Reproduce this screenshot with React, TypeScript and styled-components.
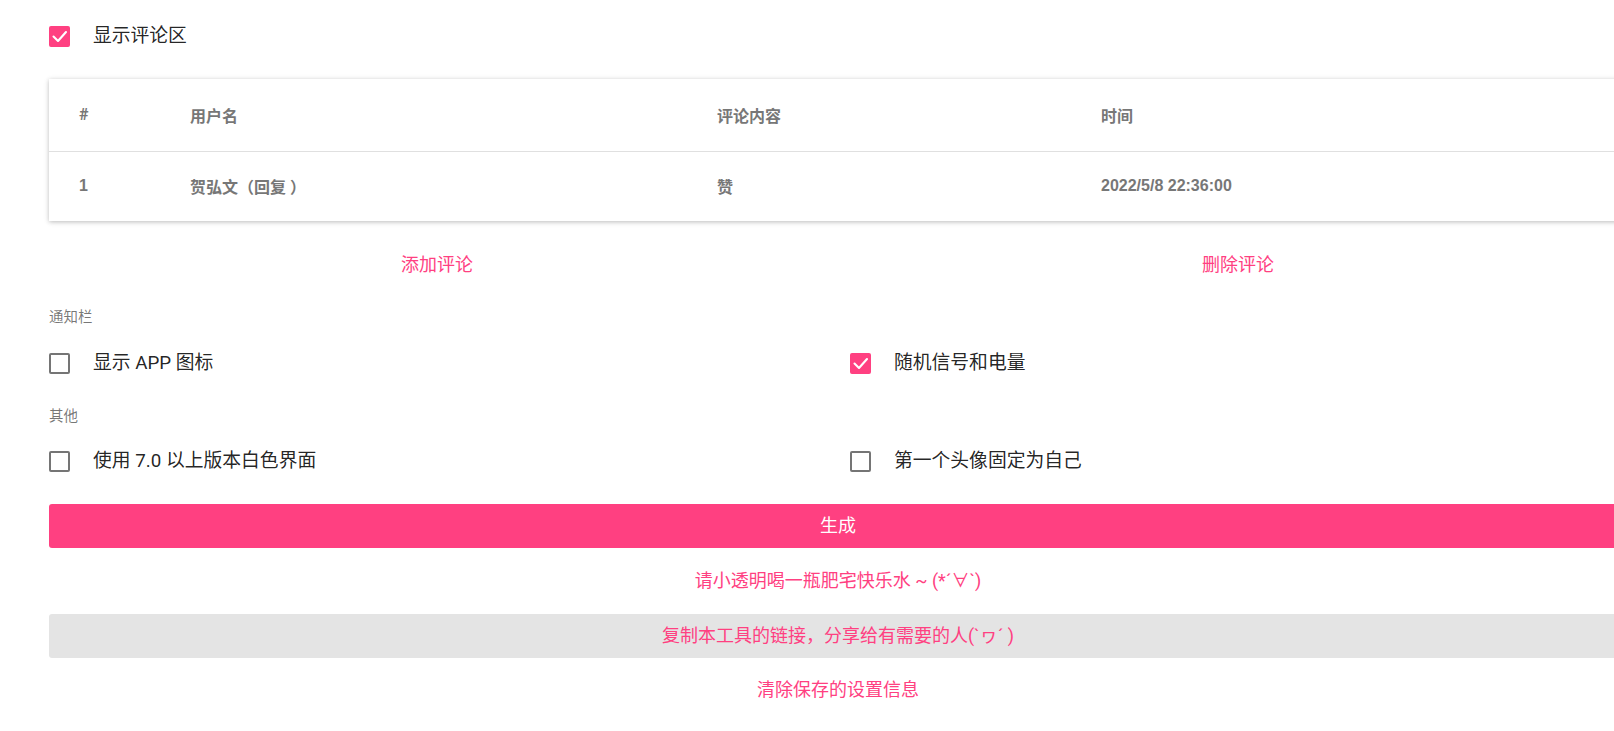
import React from "react";
import styled, { createGlobalStyle } from "styled-components";

const PINK = "#ff4081";

const Global = createGlobalStyle`
  html, body { margin: 0; padding: 0; background: #fff; overflow: hidden; }
  body {
    font-family: Roboto, "Noto Sans CJK SC", sans-serif;
    color: rgba(0, 0, 0, 0.87);
  }
  * { box-sizing: border-box; }
`;

const Page = styled.div`
  box-sizing: content-box;
  width: 1578px;
  padding: 12px 0 0 49px;
  display: flex;
  flex-direction: column;
`;

const CheckRow = styled.label`
  display: flex;
  align-items: center;
  gap: 23px;
  height: 48px;
  font-size: 18.8px;
  line-height: 1;
  cursor: pointer;
  white-space: nowrap;
`;

const Box = styled.span<{ $checked?: boolean }>`
  flex: none;
  width: 21px;
  height: 21px;
  border-radius: 2px;
  border: 2px solid ${(p) => (p.$checked ? PINK : "#757575")};
  background: ${(p) => (p.$checked ? PINK : "transparent")};
  display: flex;
  align-items: center;
  justify-content: center;
`;

const Table = styled.table`
  margin-top: 19px;
  width: 100%;
  border-collapse: collapse;
  table-layout: fixed;
  background: #fff;
  box-shadow: 0 1px 6px rgba(0, 0, 0, 0.12), 0 1px 4px rgba(0, 0, 0, 0.16);
`;

const Col = styled.col<{ $w?: number }>`
  width: ${(p) => (p.$w ? `${p.$w}px` : "auto")};
`;

const HeadCell = styled.th`
  height: 72px;
  padding: 0 0 0 30px;
  text-align: left;
  font-size: 16px;
  font-weight: bold;
  color: #777;
  border-bottom: 1px solid #e0e0e0;
`;

const BodyCell = styled.td<{ $numeric?: boolean }>`
  height: 70px;
  padding: 0 0 0 30px;
  text-align: left;
  font-size: 16px;
  font-family: ${(p) =>
    p.$numeric ? `"Liberation Sans", Arial, sans-serif` : "inherit"};
  font-weight: bold;
  color: #777;
`;

const TwoCols = styled.div<{ $mt: number }>`
  display: grid;
  grid-template-columns: 776px 776px;
  column-gap: 25px;
  margin-top: ${(p) => p.$mt}px;
`;

const TextButton = styled.button`
  height: 44px;
  border: none;
  background: transparent;
  color: ${PINK};
  font-family: inherit;
  font-size: 18px;
  line-height: 1;
  cursor: pointer;
  padding: 0;
  width: 100%;
`;

const SectionLabel = styled.div<{ $mt: number }>`
  margin-top: ${(p) => p.$mt}px;
  height: 20px;
  line-height: 20px;
  font-size: 14.5px;
  color: rgba(0, 0, 0, 0.54);
`;

const Block = styled.button<{ $variant: "primary" | "gray" | "text"; $mt: number }>`
  margin-top: ${(p) => p.$mt}px;
  width: 100%;
  height: 44px;
  border: none;
  border-radius: ${(p) => (p.$variant === "text" ? "0" : "3px")};
  background: ${(p) =>
    p.$variant === "primary" ? PINK : p.$variant === "gray" ? "#e4e4e4" : "transparent"};
  color: ${(p) => (p.$variant === "primary" ? "#fff" : PINK)};
  font-family: inherit;
  font-size: 18px;
  line-height: 1;
  padding: 0;
  cursor: pointer;
`;

const Check = () => (
  <svg width="17" height="17" viewBox="0 0 17 17" fill="none">
    <polyline
      points="2.5,8.5 7,13 15,4"
      stroke="#fff"
      strokeWidth="2.1"
      strokeLinecap="round"
      strokeLinejoin="round"
    />
  </svg>
);

const Option = ({ checked, children }: { checked?: boolean; children: React.ReactNode }) => (
  <CheckRow>
    <Box $checked={checked}>{checked && <Check />}</Box>
    <span>{children}</span>
  </CheckRow>
);

export default function App() {
  return (
    <>
      <Global />
      <Page>
        <Option checked>显示评论区</Option>
        <Table>
          <colgroup>
            <Col $w={111} />
            <Col $w={527} />
            <Col $w={384} />
            <Col />
          </colgroup>
          <thead>
            <tr>
              <HeadCell>#</HeadCell>
              <HeadCell>用户名</HeadCell>
              <HeadCell>评论内容</HeadCell>
              <HeadCell>时间</HeadCell>
            </tr>
          </thead>
          <tbody>
            <tr>
              <BodyCell $numeric>1</BodyCell>
              <BodyCell>贺弘文（回复 ）</BodyCell>
              <BodyCell>赞</BodyCell>
              <BodyCell $numeric>2022/5/8 22:36:00</BodyCell>
            </tr>
          </tbody>
        </Table>
        <TwoCols $mt={22}>
          <TextButton>添加评论</TextButton>
          <TextButton>删除评论</TextButton>
        </TwoCols>
        <SectionLabel $mt={21}>通知栏</SectionLabel>
        <TwoCols $mt={11}>
          <Option>显示 APP 图标</Option>
          <Option checked>随机信号和电量</Option>
        </TwoCols>
        <SectionLabel $mt={20}>其他</SectionLabel>
        <TwoCols $mt={10}>
          <Option>使用 7.0 以上版本白色界面</Option>
          <Option>第一个头像固定为自己</Option>
        </TwoCols>
        <Block $variant="primary" $mt={19}>生成</Block>
        <Block $variant="text" $mt={11}>请小透明喝一瓶肥宅快乐水 ~ (*´∀`)</Block>
        <Block $variant="gray" $mt={11}>复制本工具的链接，分享给有需要的人(`ヮ´ )</Block>
        <Block $variant="text" $mt={10}>清除保存的设置信息</Block>
      </Page>
    </>
  );
}
